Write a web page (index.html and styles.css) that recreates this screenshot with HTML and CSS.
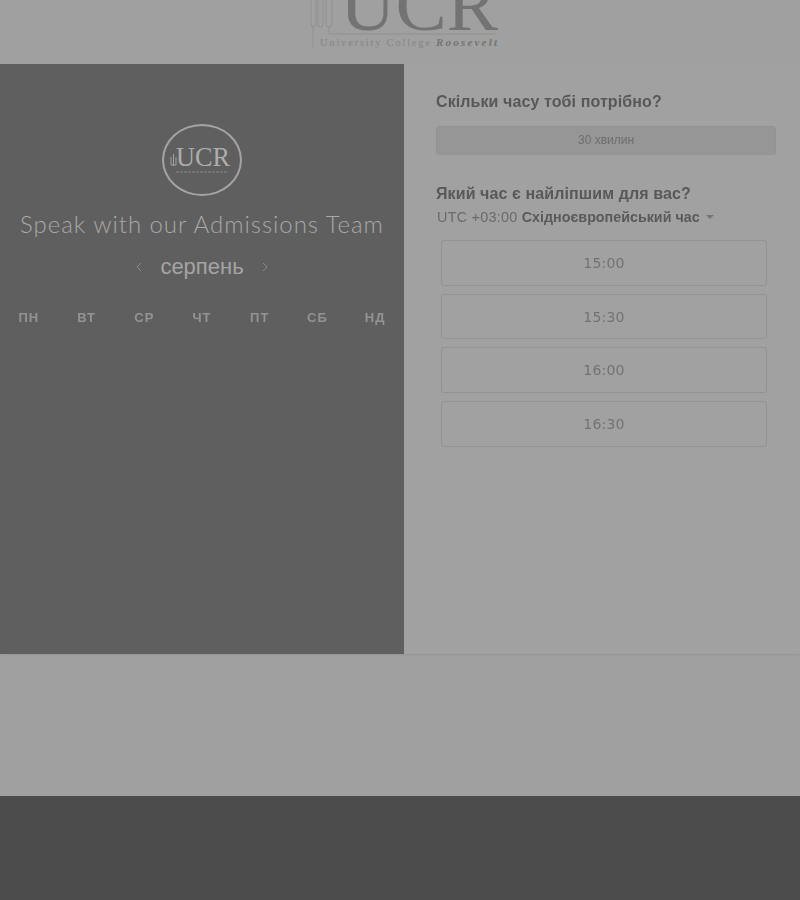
FILE: index.html
```html
<!DOCTYPE html>
<html lang="uk">
<head>
<meta charset="utf-8">
<title>Speak with our Admissions Team</title>
<link rel="stylesheet" href="styles.css">
</head>
<body>
<header class="top">
  <svg class="logo" width="200" height="50" viewBox="0 0 200 50" aria-label="University College Roosevelt">
    <g fill="none" stroke="#909090" stroke-width="1">
      <path d="M4 0V24q0 3 2.500 3T9 24V0M11 0V24q0 3 2.500 3T16 24V0M19 0V24q0 3 3 3T25 24V0M6 27V48"/>
      <path d="M22 27V34H190"/>
    </g>
    <text class="logo-mark" x="33" y="30" textLength="158" lengthAdjust="spacingAndGlyphs">UCR</text>
    <text class="logo-sub" x="13" y="46" textLength="110">University College</text>
    <text class="logo-em" x="129" y="46" textLength="61">Roosevelt</text>
  </svg>
</header>
<main class="card">
  <section class="side">
    <div class="badge">
      <svg class="badge-mark" width="70" height="40" viewBox="0 0 70 40" aria-hidden="true">
        <path d="M4 25V17M6.500 26V14M9 25V17M4 25h5" fill="none" stroke="#a0a0a0"/>
        <text class="badge-ucr" x="9" y="26" textLength="54" lengthAdjust="spacingAndGlyphs">UCR</text>
        <path d="M9 32H60" stroke="#7e7e7e" stroke-width="1.500" stroke-dasharray="3 1"/>
      </svg>
    </div>
    <h1 class="side-title">Speak with our Admissions Team</h1>
    <div class="month">
      <svg class="chev" width="8" height="12" viewBox="0 0 8 12" aria-hidden="true"><path d="M6 2 2 6l4 4" fill="none" stroke="#8a8a8a"/></svg>
      <span class="month-name">серпень</span>
      <svg class="chev" width="8" height="12" viewBox="0 0 8 12" aria-hidden="true"><path d="m2 2 4 4-4 4" fill="none" stroke="#8a8a8a"/></svg>
    </div>
    <div class="days">
      <span>ПН</span><span>ВТ</span><span>СР</span><span>ЧТ</span><span>ПТ</span><span>СБ</span><span>НД</span>
    </div>
  </section>
  <section class="panel">
    <h2 class="q">Скільки часу тобі потрібно?</h2>
    <div class="duration">30 хвилин</div>
    <h2 class="q q-second">Який час є найліпшим для вас?</h2>
    <div class="zone">UTC +03:00 <b>Східноєвропейський час</b><i class="caret"></i></div>
    <ul class="slots">
      <li>15:00</li>
      <li>15:30</li>
      <li>16:00</li>
      <li>16:30</li>
    </ul>
  </section>
</main>
<div class="spacer"></div>
<footer class="foot"></footer>
</body>
</html>
```

FILE: styles.css
```css
* { box-sizing: border-box; }
html, body { margin: 0; padding: 0; }
body {
  width: 800px;
  height: 900px;
  overflow: hidden;
  background: #a0a0a0;
  font-family: "Liberation Sans", Arial, sans-serif;
  display: flex;
  flex-direction: column;
  filter: blur(.5px);
}
.top {
  height: 64px;
  flex: none;
  display: flex;
  justify-content: center;
  align-items: flex-start;
  overflow: hidden;
  background: #a0a0a0;
}
.logo { margin-left: 14px; flex: none; }
.logo text { font-family: "Liberation Serif", serif; }
.logo-mark { font-size: 74px; fill: #737373; }
.logo-sub { font-size: 10.500px; fill: #858585; }
.logo-em { font-size: 11px; font-style: italic; font-weight: 700; fill: #747474; }
.card {
  height: 590px;
  flex: none;
  display: flex;
  box-shadow: 0 1px 2px rgba(0, 0, 0, .08);
}
.side {
  width: 404px;
  flex: none;
  background: #5f5f5f;
  display: flex;
  flex-direction: column;
  align-items: center;
  padding-top: 60px;
  color: #a6a6a6;
}
.badge {
  width: 80px;
  height: 72px;
  border: 2.500px solid #a4a4a4;
  border-radius: 50%;
  display: flex;
  align-items: center;
  justify-content: center;
}
.badge-ucr { font-family: "Liberation Serif", serif; font-size: 27px; fill: #adadad; }
.side-title {
  margin: 14px 0 0;
  font-family: Lato, sans-serif;
  font-weight: 300;
  font-size: 24px;
  line-height: 28px;
  letter-spacing: .95px;
  color: #a8a8a8;
  white-space: nowrap;
}
.month {
  margin-top: 15px;
  display: flex;
  align-items: center;
  gap: 17px;
  height: 28px;
}
.month-name { font-size: 22px; color: #a4a4a4; }
.days {
  margin-top: 28px;
  align-self: stretch;
  display: grid;
  grid-template-columns: repeat(7, 1fr);
  text-align: center;
  font-size: 13px;
  font-weight: 700;
  line-height: 18px;
  letter-spacing: 1px;
  color: #939393;
}
.panel {
  flex: 1;
  padding: 28px 24px 0 32px;
  background: #a1a1a1;
}
.q {
  margin: 0;
  font-size: 16px;
  line-height: 20px;
  font-weight: 700;
  letter-spacing: .1px;
  color: #585858;
}
.q-second { margin-top: 29px; }
.duration {
  margin-top: 14px;
  height: 29px;
  background: #969696;
  border: 1px solid #939393;
  border-radius: 3px;
  text-align: center;
  font-size: 12px;
  line-height: 27px;
  color: #6e6e6e;
}
.zone {
  margin: 3px 0 0 1px;
  font-size: 14.400px;
  line-height: 20px;
  letter-spacing: .25px;
  color: #6a6a6a;
  white-space: nowrap;
}
.zone b { color: #5a5a5a; letter-spacing: 0; font-size: 14.300px; }
.caret {
  display: inline-block;
  margin: 0 0 2px 6px;
  border: 4px solid transparent;
  border-top-color: #757575;
  border-bottom: 0;
  vertical-align: middle;
}
.slots {
  list-style: none;
  margin: 13px 9px 0 5px;
  padding: 0;
  display: flex;
  flex-direction: column;
  gap: 8px;
}
.slots li {
  height: 45.700px;
  border: 1px solid #939393;
  border-radius: 3px;
  text-align: center;
  font-family: "DejaVu Sans", sans-serif;
  font-size: 14px;
  line-height: 44px;
  letter-spacing: .2px;
  color: #727272;
}
.spacer { height: 142px; flex: none; }
.foot { flex: 1; background: #4c4c4c; }
```
